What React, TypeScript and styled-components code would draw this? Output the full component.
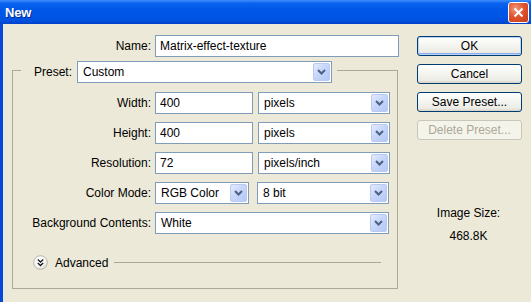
import React from 'react';
import styled, {createGlobalStyle} from 'styled-components';

const GlobalStyle = createGlobalStyle`
  html, body {
    margin: 0;
    padding: 0;
    background: #ece9d8;
  }
  body {
    font-family: 'Liberation Sans', Arial, sans-serif;
    font-size: 12px;
    color: #000;
  }
`;

const Window = styled.div`
  width: 531px;
  height: 302px;
  overflow: hidden;
  background: #ece9d8;
`;

const TitleBar = styled.div`
  height: 24px;
  display: flex;
  align-items: center;
  justify-content: space-between;
  padding: 0 2px 0 5px;
  box-sizing: border-box;
  background: linear-gradient(
    to bottom,
    #3c8dfc 0%,
    #0a62ef 14%,
    #0058e8 40%,
    #0055e5 70%,
    #0050dc 88%,
    #003fc6 100%
  );
`;

const Title = styled.span`
  color: #fff;
  font: bold 13px 'Liberation Sans', Arial, sans-serif;
  text-shadow: 1px 1px 0 #0b2a8a;
  letter-spacing: -0.2px;
`;

const CloseButton = styled.div`
  width: 21px;
  height: 21px;
  box-sizing: border-box;
  border: 1px solid #fff;
  border-radius: 3px;
  background: radial-gradient(circle at 35% 30%, #f29a7c 0%, #e0552f 45%, #c63b17 100%);
  display: flex;
  align-items: center;
  justify-content: center;
`;

const Body = styled.div`
  height: 278px;
  box-sizing: border-box;
  border-left: 3px solid #0846dc;
  padding: 11px 0 0 9px;
  display: flex;
  gap: 18px;
`;

const FormColumn = styled.div`
  width: 387px;
  display: flex;
  flex-direction: column;
`;

const Row = styled.div`
  display: flex;
  align-items: center;
  gap: 4px;
  height: 22px;
`;

const Label = styled.span<{$w: number}>`
  width: ${(p) => p.$w}px;
  flex-shrink: 0;
  text-align: right;
  white-space: nowrap;
`;

const TextInput = styled.input<{$w: number}>`
  width: ${(p) => p.$w}px;
  height: 22px;
  box-sizing: border-box;
  border: 1px solid #7f9db9;
  background: #fff;
  padding: 0 0 0 4px;
  margin: 0;
  font: 12px 'Liberation Sans', Arial, sans-serif;
  color: #000;
  outline: none;
`;

const Combo = styled.div<{$w: number}>`
  width: ${(p) => p.$w}px;
  height: 22px;
  box-sizing: border-box;
  border: 1px solid #7f9db9;
  background: #fff;
  padding: 1px;
  display: flex;
  align-items: center;
  flex-shrink: 0;
`;

const ComboText = styled.span`
  flex: 1;
  padding-left: 4px;
  white-space: nowrap;
`;

const DropButton = styled.span`
  width: 17px;
  height: 18px;
  box-sizing: border-box;
  border: 1px solid #b9c9ef;
  border-radius: 2px;
  background: linear-gradient(135deg, #e4ecfd 0%, #c7d6fb 45%, #b4c8f6 100%);
  display: flex;
  align-items: center;
  justify-content: center;
`;

const Group = styled.fieldset`
  margin: 0;
  width: 386px;
  box-sizing: border-box;
  border: 1px solid #aca899;
  padding: 9px 0 18px 0;
  min-inline-size: auto;
`;

const Legend = styled.legend`
  margin-left: 8px;
  padding: 4px 5px 0 13px;
`;

const LegendInner = styled.div`
  display: flex;
  align-items: center;
  gap: 5px;
`;

const Rows = styled.div`
  display: flex;
  flex-direction: column;
  gap: 8px;
`;

const Fields = styled.div<{$gap: number}>`
  display: flex;
  gap: ${(p) => p.$gap}px;
`;

const AdvancedRow = styled.div`
  display: flex;
  align-items: center;
  height: 15px;
  margin: 21px 16px 0 20px;
`;

const AdvancedText = styled.span`
  margin: 0 6px 0 7px;
`;

const Rule = styled.div`
  flex: 1;
  height: 1px;
  background: #aca899;
`;

const SideColumn = styled.div`
  width: 105px;
  padding-top: 1px;
  display: flex;
  flex-direction: column;
`;

const ButtonStack = styled.div`
  display: flex;
  flex-direction: column;
  gap: 8px;
`;

const Button = styled.button<{$primary?: boolean}>`
  width: 105px;
  height: 20px;
  box-sizing: border-box;
  margin: 0;
  padding: 0;
  border: 1px solid #003c74;
  border-radius: 3px;
  background: linear-gradient(to bottom, #ffffff 0%, #f5f5f1 45%, #ecebe5 85%, #d8d2c6 100%);
  box-shadow: ${(p) =>
    p.$primary ? 'inset 0 0 0 1px #bcd4f6, inset 0 -1px 0 1px #89adf0' : 'none'};
  font: 12px 'Liberation Sans', Arial, sans-serif;
  color: #000;

  &:disabled {
    border-color: #c9c7ba;
    background: #f5f4ea;
    color: #aca899;
  }
`;

const Info = styled.div`
  margin-top: 66px;
  display: flex;
  flex-direction: column;
  align-items: center;
  gap: 9px;
  line-height: 14px;
  padding-right: 2px;
`;

const Chevron: React.FC = () => (
  <svg width="9" height="6" viewBox="0 0 9 6">
    <polyline points="1,1 4.5,4.5 8,1" fill="none" stroke="#4d6185" strokeWidth="2" />
  </svg>
);

const Select: React.FC<{w: number; value: string}> = ({w, value}) => (
  <Combo $w={w}>
    <ComboText>{value}</ComboText>
    <DropButton>
      <Chevron />
    </DropButton>
  </Combo>
);

const AdvancedIcon: React.FC = () => (
  <svg width="15" height="15" viewBox="0 0 15 15">
    <defs>
      <radialGradient id="advFill" cx="40%" cy="35%" r="70%">
        <stop offset="0%" stopColor="#ffffff" />
        <stop offset="70%" stopColor="#f4f4f2" />
        <stop offset="100%" stopColor="#d4d2cc" />
      </radialGradient>
    </defs>
    <circle cx="7.5" cy="7.5" r="6.8" fill="url(#advFill)" stroke="#b8b6ad" strokeWidth="1" />
    <polyline points="4.8,4.5 7.5,7 10.2,4.5" fill="none" stroke="#1e1e1e" strokeWidth="1.4" />
    <polyline points="4.8,8 7.5,10.5 10.2,8" fill="none" stroke="#1e1e1e" strokeWidth="1.4" />
  </svg>
);

const FIELDS = [
  {label: 'Width:', value: '400', unit: 'pixels'},
  {label: 'Height:', value: '400', unit: 'pixels'},
  {label: 'Resolution:', value: '72', unit: 'pixels/inch'},
];

const App: React.FC = () => {
  return (
    <Window>
      <GlobalStyle />
      <TitleBar>
        <Title>New</Title>
        <CloseButton>
          <svg width="11" height="11" viewBox="0 0 11 11">
            <path d="M1.5 1.5 L9.5 9.5 M9.5 1.5 L1.5 9.5" stroke="#fff" strokeWidth="2" />
          </svg>
        </CloseButton>
      </TitleBar>
      <Body>
        <FormColumn>
          <Row>
            <Label $w={139}>Name:</Label>
            <TextInput $w={244} readOnly defaultValue="Matrix-effect-texture" />
          </Row>
          <Group>
            <Legend>
              <LegendInner>
                <span>Preset:</span>
                <Select w={255} value="Custom" />
              </LegendInner>
            </Legend>
            <Rows>
              {FIELDS.map((f) => (
                <Row key={f.label}>
                  <Label $w={138}>{f.label}</Label>
                  <Fields $gap={5}>
                    <TextInput $w={98} readOnly defaultValue={f.value} />
                    <Select w={132} value={f.unit} />
                  </Fields>
                </Row>
              ))}
              <Row>
                <Label $w={138}>Color Mode:</Label>
                <Fields $gap={8}>
                  <Select w={94} value="RGB Color" />
                  <Select w={132} value="8 bit" />
                </Fields>
              </Row>
              <Row>
                <Label $w={138}>Background Contents:</Label>
                <Select w={234} value="White" />
              </Row>
            </Rows>
            <AdvancedRow>
              <AdvancedIcon />
              <AdvancedText>Advanced</AdvancedText>
              <Rule />
            </AdvancedRow>
          </Group>
        </FormColumn>
        <SideColumn>
          <ButtonStack>
            <Button $primary>OK</Button>
            <Button>Cancel</Button>
            <Button>Save Preset...</Button>
            <Button disabled>Delete Preset...</Button>
          </ButtonStack>
          <Info>
            <span>Image Size:</span>
            <span>468.8K</span>
          </Info>
        </SideColumn>
      </Body>
    </Window>
  );
};

export default App;
